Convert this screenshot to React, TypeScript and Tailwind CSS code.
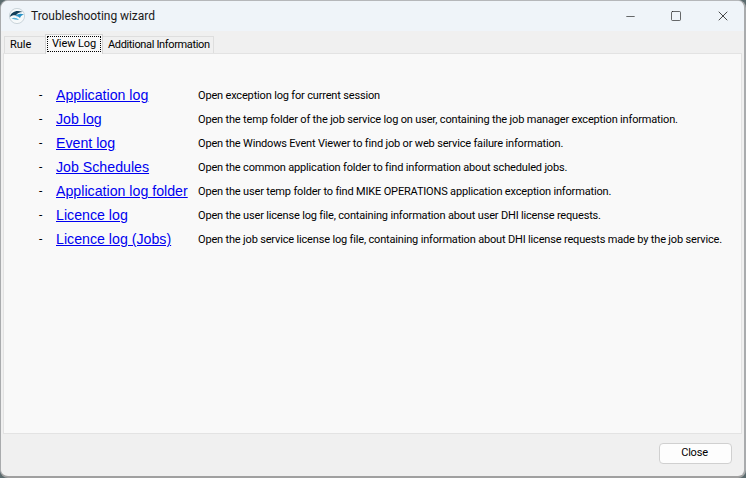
import { Minus, Square, X } from "lucide-react";

const rows = [
  ["Application log", "Open exception log for current session"],
  ["Job log", "Open the temp folder of the job service log on user, containing the job manager exception information."],
  ["Event log", "Open the Windows Event Viewer to find job or web service failure information."],
  ["Job Schedules", "Open the common application folder to find information about scheduled jobs."],
  ["Application log folder", "Open the user temp folder to find MIKE OPERATIONS application exception information."],
  ["Licence log", "Open the user license log file, containing information about user DHI license requests."],
  ["Licence log (Jobs)", "Open the job service license log file, containing information about DHI license requests made by the job service."],
];

function Logo() {
  return (
    <svg width="16" height="16" viewBox="0 0 16 16">
      <circle cx="8" cy="8" r="7.6" fill="#f6f9fa" stroke="#b9c6cd" strokeWidth="0.7" />
      <path d="M0.8 9C2 4 7.5 1.2 13.8 4 10.5 3.9 8 5.2 7 7.6 5 6.8 2.8 7.4 0.8 9Z" fill="#123f5a" />
      <path d="M6.5 8C8.8 5.4 12.4 5 15 6.8 13 7 11.6 8 11 10 9.8 8.8 8.2 8.2 6.5 8Z" fill="#2a93c8" />
      <path d="M2.4 10.2C5 9.2 8 9.6 10 12 7.2 11.4 4.8 11.6 2.4 10.2Z" fill="#55b3dc" />
    </svg>
  );
}

export default function App() {
  return (
    <div className="w-[746px] h-[478px] bg-[#5b6b6e] font-['Roboto',sans-serif] overflow-hidden">
      <div className="w-full h-full flex flex-col bg-[#f0f0f0] rounded-lg border-t border-l border-r-2 border-b-2 border-t-[#b5b7ba] border-l-[#a9abad] border-r-[#a9abad] border-b-[#a0a0a0] overflow-hidden">

        {/* TITLE BAR */}
        <div className="h-[30px] shrink-0 bg-[#eff4f9] flex items-center">
          <div className="ml-[8px] mr-[6px]">
            <Logo />
          </div>
          <span className="text-[12px] tracking-[-0.05px] text-[#1a1a1a]">Troubleshooting wizard</span>
          <div className="ml-auto flex items-center text-[#1a1a1a]">
            <div className="w-[46px] pr-[4px] flex justify-center"><Minus size={13} strokeWidth={1.2} /></div>
            <div className="w-[46px] pr-[5px] flex justify-center"><Square size={12} strokeWidth={1.3} /></div>
            <div className="w-[43px] flex justify-center"><X size={16} strokeWidth={1.2} /></div>
          </div>
        </div>

        {/* TABS */}
        <div className="h-[22px] shrink-0 flex items-end pl-[3px] text-[11px] text-black">
          <div className="h-[17px] w-[41px] pl-[5px] flex items-center border-t border-l border-[#dedede] bg-[#f0f0f0]">Rule</div>
          <div className="h-[20px] w-[58px] z-10 flex items-start justify-center bg-[#f9f9f9] border-t border-x border-[#d4d4d4] -mb-px">
            <span className="mt-px border border-dotted border-black w-[54px] h-[16px] leading-[13px] text-center tracking-[-0.1px] whitespace-nowrap">View Log</span>
          </div>
          <div className="h-[17px] w-[111px] pl-[5px] flex items-center border-t border-r border-[#dedede] tracking-[-0.35px] whitespace-nowrap">Additional Information</div>
        </div>

        {/* PANEL */}
        <div className="mx-[2px] h-[381px] shrink-0 bg-[#f9f9f9] border border-[#e3e3e3] pt-[29px] pl-[35px]">
          <div className="flex flex-col">
            {rows.map(([link, desc]) => (
              <div key={link} className="h-[24px] flex items-center">
                <span className="w-[17px] shrink-0 text-[12px] text-black">-</span>
                <a className="w-[142px] shrink-0 pt-[2px] font-['Liberation_Sans',sans-serif] text-[14.2px] text-[#0000f0] underline whitespace-nowrap">{link}</a>
                <span className="pt-[2px] text-[11px] tracking-[-0.17px] text-black whitespace-nowrap">{desc}</span>
              </div>
            ))}
          </div>
        </div>

        {/* FOOTER */}
        <div className="flex-1 flex justify-end items-start pt-[9px] pr-[12px]">
          <button className="w-[73px] h-[21px] pr-[2px] bg-[#fdfdfd] border border-[#d0d0d0] rounded-[4px] text-[11px] tracking-[-0.2px] text-black">Close</button>
        </div>

      </div>
    </div>
  );
}
